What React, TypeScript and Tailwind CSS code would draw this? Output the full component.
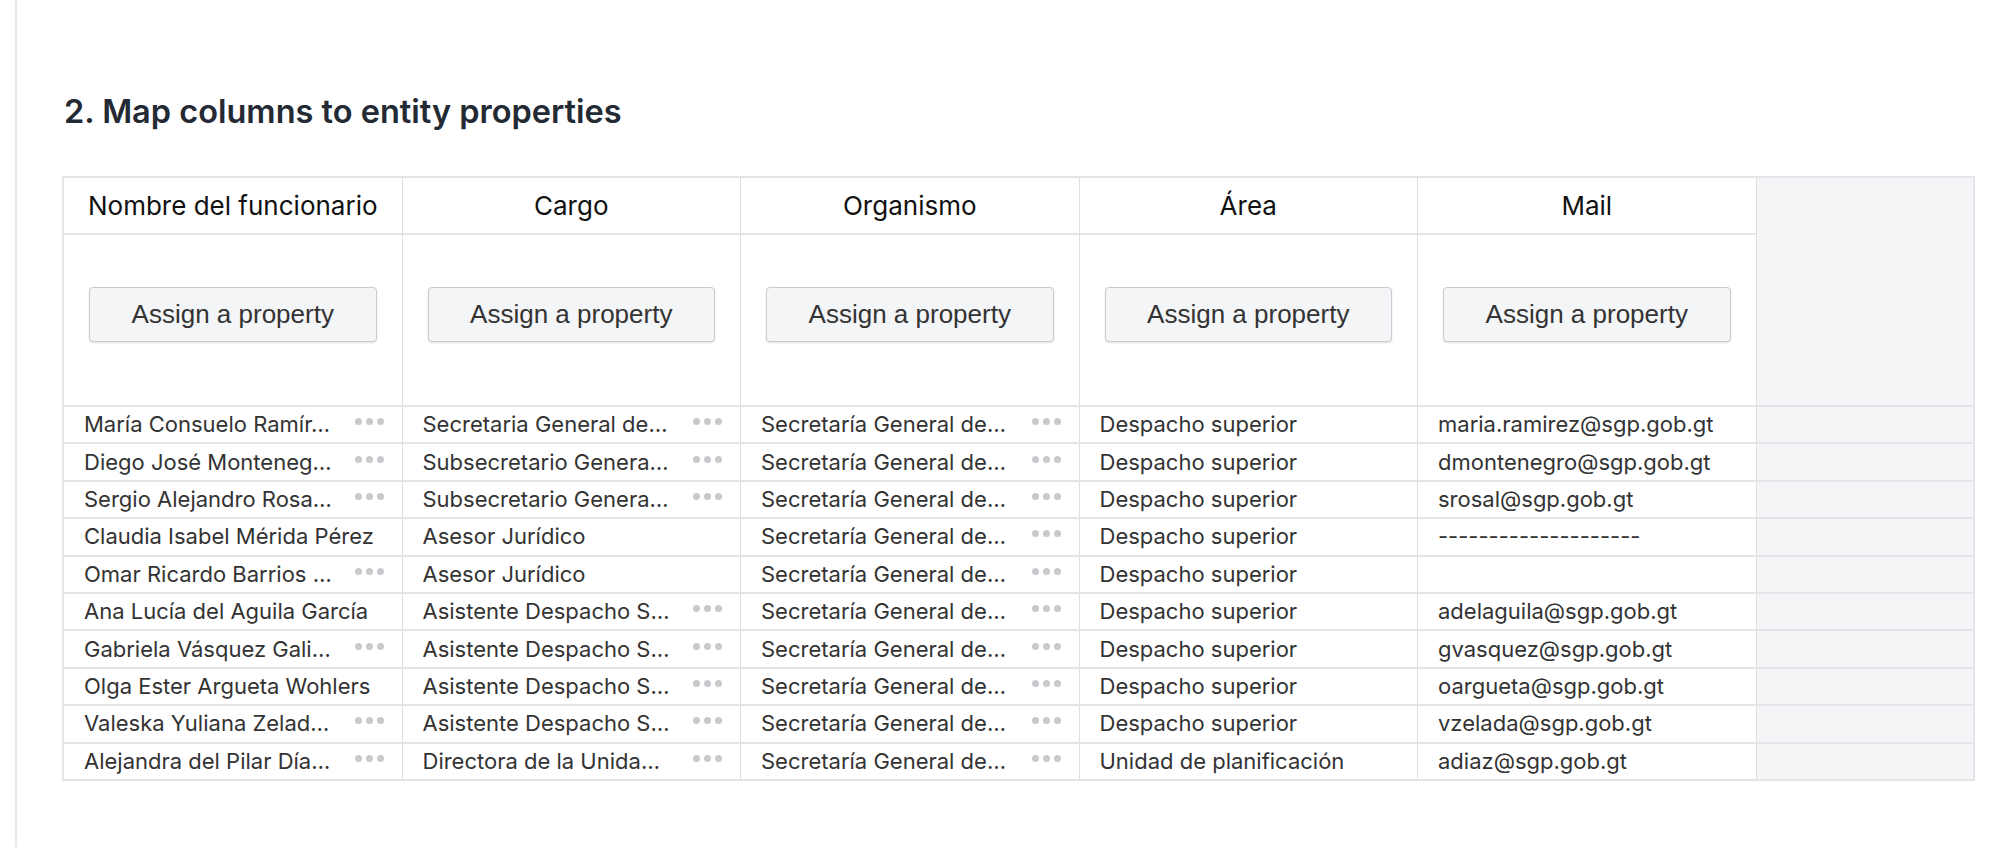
import React from "react";

type Cell = { t: string; d?: boolean };

const headers = ["Nombre del funcionario", "Cargo", "Organismo", "Área", "Mail"];

const org: Cell = { t: "Secretaría General de…", d: true };
const desp: Cell = { t: "Despacho superior" };

const rows: Cell[][] = [
  [{ t: "María Consuelo Ramír…", d: true }, { t: "Secretaria General de…", d: true }, org, desp, { t: "maria.ramirez@sgp.gob.gt" }],
  [{ t: "Diego José Monteneg…", d: true }, { t: "Subsecretario Genera…", d: true }, org, desp, { t: "dmontenegro@sgp.gob.gt" }],
  [{ t: "Sergio Alejandro Rosa…", d: true }, { t: "Subsecretario Genera…", d: true }, org, desp, { t: "srosal@sgp.gob.gt" }],
  [{ t: "Claudia Isabel Mérida Pérez" }, { t: "Asesor Jurídico" }, org, desp, { t: "--------------------" }],
  [{ t: "Omar Ricardo Barrios …", d: true }, { t: "Asesor Jurídico" }, org, desp, { t: "" }],
  [{ t: "Ana Lucía del Aguila García" }, { t: "Asistente Despacho S…", d: true }, org, desp, { t: "adelaguila@sgp.gob.gt" }],
  [{ t: "Gabriela Vásquez Gali…", d: true }, { t: "Asistente Despacho S…", d: true }, org, desp, { t: "gvasquez@sgp.gob.gt" }],
  [{ t: "Olga Ester Argueta Wohlers" }, { t: "Asistente Despacho S…", d: true }, org, desp, { t: "oargueta@sgp.gob.gt" }],
  [{ t: "Valeska Yuliana Zelad…", d: true }, { t: "Asistente Despacho S…", d: true }, org, desp, { t: "vzelada@sgp.gob.gt" }],
  [{ t: "Alejandra del Pilar Día…", d: true }, { t: "Directora de la Unida…", d: true }, org, { t: "Unidad de planificación" }, { t: "adiaz@sgp.gob.gt" }],
];

function Dots() {
  return (
    <span className="ml-[9px] flex shrink-0 gap-[4px] -mt-[6px]">
      <span className="h-[7px] w-[7px] rounded-full bg-[#c8c9cc]" />
      <span className="h-[7px] w-[7px] rounded-full bg-[#c8c9cc]" />
      <span className="h-[7px] w-[7px] rounded-full bg-[#c8c9cc]" />
    </span>
  );
}

export default function App() {
  return (
    <div className="h-[847px] w-[1999px] overflow-hidden bg-white font-['Inter',sans-serif]">
      <div className="ml-[15px] h-full border-l-2 border-[#e6e7ea] pl-[45px] pt-[94px]">
        <h2 className="ml-[2px] text-[32.5px] font-semibold leading-[36px] text-[#232a33]">
          2. Map columns to entity properties
        </h2>
        <div className="mt-[46px] w-[1913px] border-2 border-[#e3e5e8] bg-[#f4f5f7]">
          <div className="flex border-b-2 border-[#e3e5e8]">
            {headers.map((h) => (
              <div key={h} className="w-[338.5px] shrink-0 border-r border-[#dcdee2] bg-white">
                <div className="flex h-[57px] items-center justify-center border-b-2 border-[#e3e5e8] text-[26px] text-[#111]">
                  {h}
                </div>
                <div className="h-[170px] px-[25px] pt-[52px]">
                  <button className="h-[55px] w-full rounded-[4px] border border-[#c9cbcf] bg-[#f4f5f7] font-['Liberation_Sans',sans-serif] text-[26px] text-[#333] shadow-[0_1px_2px_rgba(0,0,0,0.12)]">
                    Assign a property
                  </button>
                </div>
              </div>
            ))}
          </div>
          {rows.map((r, i) => (
            <div
              key={i}
              className={
                i === rows.length - 1
                  ? "flex h-[35.4px]"
                  : "flex h-[37.4px] border-b-2 border-[#e3e5e8]"
              }
            >
              {r.map((c, j) => (
                <div
                  key={j}
                  className="flex w-[338.5px] shrink-0 items-center border-r border-[#dcdee2] bg-white pl-[20px] pr-[18px] text-[22px] text-[#333]"
                >
                  <span className="min-w-0 flex-1 truncate whitespace-nowrap">{c.t}</span>
                  {c.d ? <Dots /> : null}
                </div>
              ))}
              <div className="flex-1" />
            </div>
          ))}
        </div>
      </div>
    </div>
  );
}
